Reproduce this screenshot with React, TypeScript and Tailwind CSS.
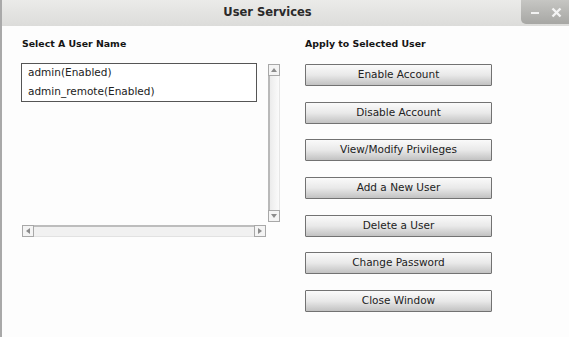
import type { ReactNode } from "react";

const actions = [
  { label: "Enable Account", gap: "mt-0" },
  { label: "Disable Account", gap: "mt-4" },
  { label: "View/Modify Privileges", gap: "mt-[15px]" },
  { label: "Add a New User", gap: "mt-4" },
  { label: "Delete a User", gap: "mt-4" },
  { label: "Change Password", gap: "mt-[15px]" },
  { label: "Close Window", gap: "mt-4" },
];

const users = ["admin(Enabled)", "admin_remote(Enabled)"];

function ArrowBox({ dir }: { dir: "up" | "down" | "left" | "right" }) {
  const points = {
    up: "2,7 5,3 8,7",
    down: "2,3 5,7 8,3",
    left: "7,2 3,5 7,8",
    right: "3,2 7,5 3,8",
  }[dir];

  return (
    <div className="flex h-[12px] w-[12px] shrink-0 items-center justify-center border border-[#a8a8a8] bg-[#f4f4f4]">
      <svg width="10" height="10" viewBox="0 0 10 10">
        <polygon points={points} fill="#8c8c8c" />
      </svg>
    </div>
  );
}

function Heading({ children }: { children: ReactNode }) {
  return (
    <div className="text-[9.4px] font-bold leading-[11px] text-[#151515]">
      {children}
    </div>
  );
}

function WindowControls() {
  return (
    <div className="absolute right-0 top-0 flex h-[24px] w-[48px] items-center gap-[12px] rounded-bl-[5px] bg-gradient-to-b from-[#c6c6c3] to-[#a7a7a4] pl-[10px]">
      <svg width="8" height="10" viewBox="0 0 8 10">
        <rect x="0" y="5" width="8" height="2" fill="#f2f2f2" />
      </svg>
      <svg width="11" height="11" viewBox="0 0 11 11">
        <path
          d="M1.5 1.5 L9.5 9.5 M9.5 1.5 L1.5 9.5"
          stroke="#f4f4f4"
          strokeWidth="2.4"
        />
      </svg>
    </div>
  );
}

export default function App() {
  return (
    <div
      className="flex h-[337px] w-[569px] flex-col overflow-hidden border-l-2 border-[#a9a9a9] bg-[#fdfdfd] text-[#222]"
      style={{ fontFamily: '"DejaVu Sans", Verdana, sans-serif' }}
    >
      <div className="relative flex h-[26px] shrink-0 items-center justify-center bg-gradient-to-b from-[#ebebe9] to-[#dcdcda] pr-[36px]">
        <span className="text-[11.5px] font-bold text-[#2a2a2a]">
          User Services
        </span>
        <WindowControls />
      </div>

      <div className="flex pl-[19px] pt-[12px]">
        <div className="flex w-[259px] flex-col">
          <div className="pl-[1px]">
            <Heading>Select A User Name</Heading>
          </div>

          <div className="mt-[14px] flex items-start">
            <div className="h-[39px] w-[236px] border border-[#555] bg-white pl-[6px] text-[10.5px]">
              {users.map((user) => (
                <div key={user} className="h-[19px] leading-[17px]">
                  {user}
                </div>
              ))}
            </div>

            <div className="ml-[11px] mt-[1px] flex h-[158px] w-[12px] flex-col">
              <ArrowBox dir="up" />
              <div className="flex-1 border-l-2 border-r border-l-[#b9b9b9] border-r-[#e6e6e6] bg-gradient-to-r from-[#ececec] to-[#fbfbfb]" />
              <ArrowBox dir="down" />
            </div>
          </div>

          <div className="ml-[1px] mt-[3px] flex h-[12px] w-[244px]">
            <ArrowBox dir="left" />
            <div className="flex-1 border-b border-t-2 border-b-[#e2e2e2] border-t-[#bdbdbd] bg-[#f1f1f1]" />
            <ArrowBox dir="right" />
          </div>
        </div>

        <div className="ml-[25px] flex flex-col">
          <Heading>Apply to Selected User</Heading>

          <div className="mt-[15px] flex flex-col">
            {actions.map((action) => (
              <button
                key={action.label}
                className={`${action.gap} flex h-[22px] w-[187px] items-center justify-center rounded-[1px] border border-[#727272] bg-gradient-to-b from-[#fafafa] via-[#e9e9e9] to-[#c2c2c2] text-[10.5px] text-[#222]`}
              >
                {action.label}
              </button>
            ))}
          </div>
        </div>
      </div>
    </div>
  );
}
